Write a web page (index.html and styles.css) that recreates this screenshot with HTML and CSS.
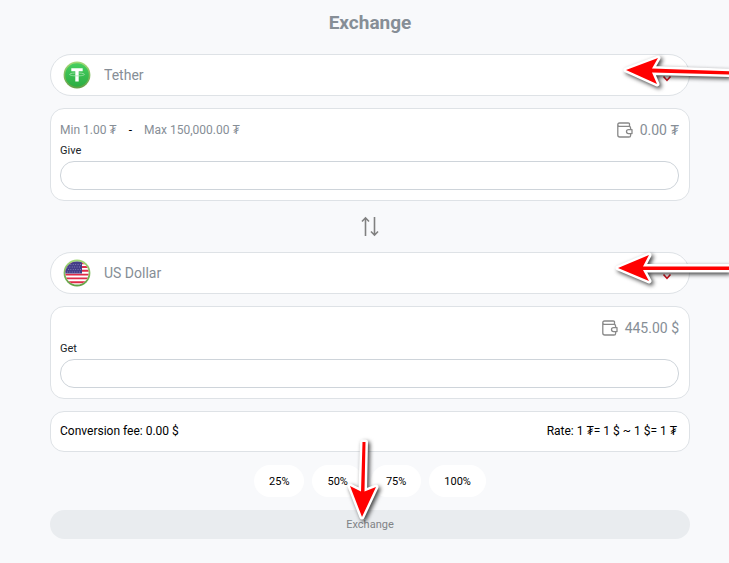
FILE: index.html
```html
<!DOCTYPE html>
<html lang="en">
<head>
<meta charset="utf-8">
<meta name="viewport" content="width=device-width, initial-scale=1">
<title>Exchange</title>
<link rel="stylesheet" href="styles.css">
</head>
<body>
<svg class="defs" aria-hidden="true">
  <defs>
    <linearGradient id="rim" x1="0" y1="0" x2="0" y2="1"><stop offset="0" stop-color="#a3d977"/><stop offset="1" stop-color="#5f9f45"/></linearGradient>
    <linearGradient id="coin" x1="0" y1="0" x2="0" y2="1"><stop offset="0" stop-color="#46cf5f"/><stop offset="1" stop-color="#2cad43"/></linearGradient>
    <clipPath id="disc"><circle cx="14" cy="14" r="11.6"/></clipPath>
    <symbol id="wallet" viewBox="0 0 16 16"><path d="M12.5 4V2.2Q12.5 1 11.3 1H2.5Q.8 1 .8 2.7V13Q.8 15 2.8 15H12Q13.6 15 13.6 13.4V11.5M.8 2.8Q.8 4.4 2.5 4.4H12Q13.6 4.4 13.6 6V7.6M15 7.6H11.5a2 2 0 0 0 0 4H15Z" fill="none" stroke="#888" stroke-width="1.3" stroke-linejoin="round"/></symbol>
    <symbol id="chevron" viewBox="0 0 10 8"><path d="M1.5 1.5L5 5.3L8.5 1.5" fill="none" stroke="#c8141e" stroke-width="1.6"/></symbol>
  </defs>
</svg>
<main class="exchange">
  <h1 class="title">Exchange</h1>

  <div class="picker">
    <select class="picker-select" aria-label="Currency to give"><option>Tether</option></select>
    <svg class="coin" viewBox="0 0 28 28" aria-hidden="true">
      <circle cx="14" cy="14" r="13.4" fill="url(#rim)"/>
      <circle cx="14" cy="14" r="11.8" fill="url(#coin)"/>
      <path d="M8.3 7.3H19.7V10.2H15.7V20.5H12.3V10.2H8.3Z" fill="#fff"/>
      <path d="M11.8 12C4.5 12.4 4.5 14.8 14 14.9C23.5 14.8 23.5 12.4 16.2 12" fill="none" stroke="#a5e5ae" stroke-width=".8"/>
    </svg>
    <svg class="chevron" aria-hidden="true"><use href="#chevron"/></svg>
  </div>

  <section class="card give">
    <div class="card-head">
      <p class="limits"><span>Min 1.00 ₮</span><span class="dash">-</span><span>Max 150,000.00 ₮</span></p>
      <p class="balance"><svg class="wallet" aria-hidden="true"><use href="#wallet"/></svg>0.00 ₮</p>
    </div>
    <label class="field-label" for="give">Give</label>
    <input class="field" id="give" type="text">
  </section>

  <button class="swap" type="button" aria-label="Swap currencies">
    <svg class="swap-icon" viewBox="0 0 20 22" aria-hidden="true"><path d="M5.500 20V1.500M2 5.500L5.500 1.800L9 5.500M14.500 1V19.500M11 15.500L14.500 19.200L18 15.500" fill="none" stroke="#808080" stroke-width="1.6"/></svg>
  </button>

  <div class="picker">
    <select class="picker-select" aria-label="Currency to get"><option>US Dollar</option></select>
    <svg class="coin" viewBox="0 0 28 28" aria-hidden="true">
      <circle cx="14" cy="14" r="13.4" fill="url(#rim)"/>
      <g clip-path="url(#disc)">
        <path d="M0 0H28V28H0Z" fill="#fff"/>
        <path d="M0 4.200H28M0 8H28M0 11.800H28M0 15.600H28M0 19.400H28M0 23.200H28" stroke="#df2b48" stroke-width="1.9"/>
        <path d="M0 0H19V14.400H0Z" fill="#443e88"/>
        <path d="M5 5.500H18M4 8H18M5 10.500H18M4 13H18" stroke="#8a87bd" stroke-width=".9" stroke-dasharray=".9 1.5"/>
      </g>
    </svg>
    <svg class="chevron" aria-hidden="true"><use href="#chevron"/></svg>
  </div>

  <section class="card get">
    <div class="card-head">
      <p class="balance"><svg class="wallet" aria-hidden="true"><use href="#wallet"/></svg>445.00 $</p>
    </div>
    <label class="field-label" for="get">Get</label>
    <input class="field" id="get" type="text">
  </section>

  <section class="summary">
    <p>Conversion fee: 0.00 $</p>
    <p>Rate: 1 ₮= 1 $ ~ 1 $= 1 ₮</p>
  </section>

  <div class="shares">
    <button class="share" type="button">25%</button>
    <button class="share" type="button">50%</button>
    <button class="share" type="button">75%</button>
    <button class="share" type="button">100%</button>
  </div>
  <button class="submit" type="button">Exchange</button>
</main>

<svg class="pointer pointer-give" viewBox="0 0 108 46" aria-hidden="true"><path d="M5 17L37 5L31 15.500L118 18.700V21.700L31 19.500L36 31Z"/></svg>
<svg class="pointer pointer-get" viewBox="0 0 116 46" aria-hidden="true"><path d="M5 18L36 5L30 16.500H126V20H30L36 31Z"/></svg>
<svg class="pointer pointer-submit" viewBox="0 0 46 90" aria-hidden="true"><path d="M18 82L6 51L17 56.500L18.500 7H21.500L20.500 56.500L32 52Z"/></svg>
</body>
</html>
```
FILE: styles.css
```css
* {
  box-sizing: border-box;
}

body {
  position: relative;
  margin: 0;
  min-height: 100vh;
  overflow-x: hidden;
  background: #f8f9fb;
  color: #000;
  font-family: Roboto, "Liberation Sans", sans-serif;
  font-size: 12px;
}

p {
  margin: 0;
}

button,
input,
select {
  font: inherit;
  color: inherit;
}

.defs {
  position: absolute;
  width: 0;
  height: 0;
}

.exchange {
  display: flex;
  flex-direction: column;
  padding: 8px 39px 24px 50px;
}

.title {
  margin: 0 0 16px;
  color: #868e96;
  font-size: 19px;
  line-height: 30px;
  font-weight: 700;
  text-align: center;
}

.picker {
  display: grid;
  align-items: center;
}

.picker > * {
  grid-area: 1 / 1;
}

.picker-select {
  appearance: none;
  width: 100%;
  height: 42px;
  padding: 0 48px 0 53px;
  border: 1px solid #dee2e6;
  border-radius: 21px;
  background: #fff;
  color: #868e96;
  font-size: 14px;
}

.coin {
  width: 28px;
  height: 28px;
  margin-left: 13px;
  pointer-events: none;
}

.chevron {
  justify-self: end;
  width: 10px;
  height: 8px;
  margin: 8px 18px 0 0;
  pointer-events: none;
}

.card {
  margin-top: 12px;
  padding: 10px 10px 10px 9px;
  border: 1px solid #dee2e6;
  border-radius: 14px;
  background: #fff;
}

.card-head {
  display: flex;
  align-items: center;
  color: #868e96;
}

.limits {
  display: flex;
  gap: 12px;
  line-height: 22px;
}

.dash {
  color: #000;
}

.balance {
  display: flex;
  align-items: center;
  gap: 7px;
  margin-left: auto;
  font-size: 14px;
  line-height: 22px;
}

.wallet {
  width: 16px;
  height: 16px;
}

.field-label {
  display: block;
  color: #212529;
  font-size: 11px;
  line-height: 20px;
}

.field {
  display: block;
  width: 100%;
  height: 29px;
  padding: 0 12px;
  border: 1px solid #ced4da;
  border-radius: 14px;
  background: #fff;
}

.swap {
  align-self: center;
  display: flex;
  align-items: center;
  height: 51px;
  padding: 0;
  border: 0;
  background: none;
}

.swap-icon {
  width: 20px;
  height: 22px;
}

.summary {
  display: flex;
  justify-content: space-between;
  margin-top: 12px;
  padding: 10px 12px 10px 9px;
  border: 1px solid #dee2e6;
  border-radius: 14px;
  background: #fff;
  line-height: 19px;
}

.shares {
  display: flex;
  justify-content: center;
  gap: 8px;
  margin: 13px 0;
}

.share {
  height: 32px;
  padding: 0 15px;
  border: 0;
  border-radius: 16px;
  background: #fff;
  font-size: 11px;
}

.submit {
  height: 29px;
  border: 0;
  border-radius: 15px;
  background: #e9ecef;
  color: #808386;
  font-size: 11px;
}

.pointer {
  position: absolute;
  pointer-events: none;
  fill: #f00;
  stroke: #fff;
  stroke-width: 5px;
  stroke-linejoin: round;
  paint-order: stroke;
  filter: drop-shadow(2px 2px 2px #000b);
}

.pointer-give {
  top: 53px;
  right: 0;
  width: 108px;
  height: 46px;
}

.pointer-get {
  top: 250px;
  right: 0;
  width: 116px;
  height: 46px;
}

.pointer-submit {
  top: 435px;
  left: calc(50% - 21px);
  width: 46px;
  height: 90px;
}
```
